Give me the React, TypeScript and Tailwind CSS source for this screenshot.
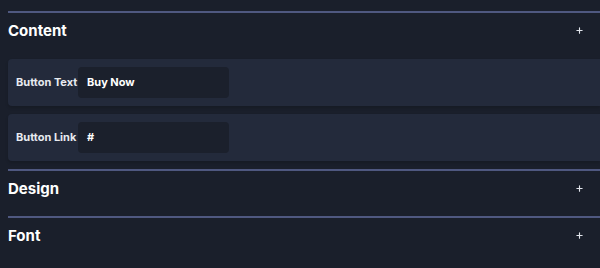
import { Plus } from 'lucide-react'

type Field = { label: string; value: string }

const fields: Field[] = [
  { label: 'Button Text', value: 'Buy Now' },
  { label: 'Button Link', value: '#' },
]

function SectionHeader({ title }: { title: string }) {
  return (
    <div className="flex h-[37px] items-center justify-between border-t-2 border-[#4f5880] pr-[16px]">
      <h3 className="text-[15px] font-bold leading-none text-white">{title}</h3>
      <Plus className="h-[9px] w-[9px] text-[#e2e5ec]" strokeWidth={3} />
    </div>
  )
}

export default function App() {
  return (
    <div
      className="h-[268px] w-[600px] overflow-hidden bg-[#1a1f2b] pl-[8px] pt-[11px]"
      style={{ fontFamily: 'Inter, "Noto Sans", sans-serif' }}
    >
      <section>
        <SectionHeader title="Content" />
        <div className="flex flex-col gap-[8px] pb-[8px] pt-[11px]">
          {fields.map((f) => (
            <div key={f.label} className="flex h-[47px] items-center rounded-l-[4px] bg-[#232a3b] pl-[8px] shadow-[0_2px_3px_rgba(0,0,0,0.15)]">
              <span className="w-[62px] text-[11px] font-bold text-[#e8eaf0]">{f.label}</span>
              <div className="flex h-[31px] w-[151px] items-center rounded-[4px] bg-[#1b202c] pl-[9px] text-[11px] font-bold text-white">
                {f.value}
              </div>
            </div>
          ))}
        </div>
      </section>
      <section className="pb-[10px]">
        <SectionHeader title="Design" />
      </section>
      <section className="pb-[10px]">
        <SectionHeader title="Font" />
      </section>
    </div>
  )
}
